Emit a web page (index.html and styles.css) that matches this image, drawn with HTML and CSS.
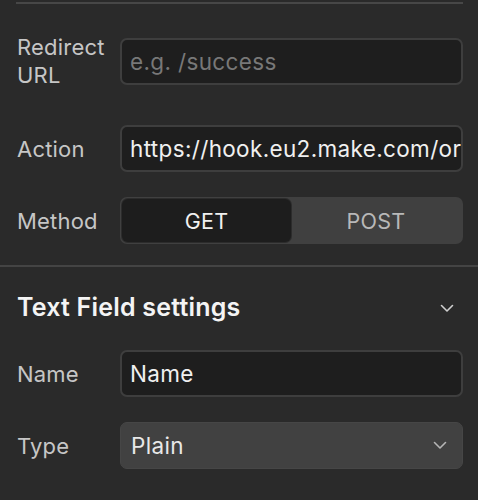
FILE: index.html
```html
<!DOCTYPE html>
<html>
<head>
<meta charset="utf-8">
<link rel="stylesheet" href="styles.css">
</head>
<body>
<div class="panel">
  <div class="top-rule"></div>
  <section class="form-section">
    <div class="row row-tall">
      <label class="label">Redirect<br>URL</label>
      <div class="input placeholder">e.g. /success</div>
    </div>
    <div class="row">
      <label class="label">Action</label>
      <div class="input value">https://hook.eu2.make.com/or</div>
    </div>
    <div class="row">
      <label class="label">Method</label>
      <div class="segmented">
        <div class="seg seg-active">GET</div>
        <div class="seg">POST</div>
      </div>
    </div>
  </section>
  <div class="divider"></div>
  <section class="settings">
    <div class="settings-head">
      <h2 class="title">Text Field settings</h2>
      <svg class="chev" width="14" height="9" viewBox="0 0 14 9"><path d="M1.5 1.5 L7 7 L12.5 1.5" fill="none" stroke="#cfcfcf" stroke-width="1.6" stroke-linecap="round" stroke-linejoin="round"/></svg>
    </div>
    <div class="row">
      <label class="label">Name</label>
      <div class="input value">Name</div>
    </div>
    <div class="row">
      <label class="label">Type</label>
      <div class="select">
        <span>Plain</span>
        <svg width="14" height="9" viewBox="0 0 14 9"><path d="M1.5 1.5 L7 7 L12.5 1.5" fill="none" stroke="#b5b5b5" stroke-width="1.6" stroke-linecap="round" stroke-linejoin="round"/></svg>
      </div>
    </div>
  </section>
</div>
</body>
</html>
```
FILE: styles.css
```css
html, body {
  margin: 0;
  padding: 0;
  background: #2a2a2a;
}
body {
  font-family: Inter, "Noto Sans", sans-serif;
  color: #c9c9c9;
  width: 478px;
  height: 500px;
  overflow: hidden;
}
.top-rule {
  height: 2px;
  margin: 2px 15px 0 16px;
  background: #474747;
}
.form-section {
  padding: 29px 15px 0 17px;
  display: flex;
  flex-direction: column;
  gap: 25px;
}
.row {
  display: grid;
  grid-template-columns: 103px 1fr;
  align-items: center;
}
.row-tall {
  height: 56px;
  margin-bottom: 11px;
}
.label {
  font-size: 22px;
  line-height: 28px;
  letter-spacing: 0.2px;
  color: #c6c6c6;
}
.input {
  height: 47px;
  box-sizing: border-box;
  border: 2px solid #3e3e3e;
  border-radius: 7px;
  background: #1e1e1e;
  padding: 0 8px;
  font-size: 22.5px;
  letter-spacing: 0.35px;
  line-height: 43px;
  white-space: nowrap;
  overflow: hidden;
}
.placeholder { color: #787878; }
.value { color: #f0f0f0; }
.segmented {
  height: 47px;
  box-sizing: border-box;
  border-radius: 7px;
  background: #404040;
  padding: 2px;
  display: flex;
}
.seg {
  flex: 1;
  display: flex;
  align-items: center;
  justify-content: center;
  font-size: 21.5px;
  letter-spacing: 0.3px;
  color: #b8b8b8;
  border-radius: 6px;
}
.seg-active {
  flex: 0 0 169px;
  background: #1d1d1d;
  color: #f0f0f0;
  box-shadow: 0 0 0 1px #2c2c2c;
}
.divider {
  height: 2px;
  margin-top: 21px;
  background: #444444;
}
.settings {
  padding: 0 15px 0 17px;
  display: flex;
  flex-direction: column;
  gap: 25px;
}
.settings-head {
  display: flex;
  align-items: center;
  justify-content: space-between;
  height: 80px;
  margin-bottom: -22px;
  padding-right: 9px;
}
.title {
  margin: 0;
  font-size: 25px;
  font-weight: 600;
  letter-spacing: 0.2px;
  color: #f4f4f4;
}
.chev { margin-top: 2px; }
.select {
  height: 47px;
  box-sizing: border-box;
  border-radius: 7px;
  background: #414141;
  border: 1px solid #464646;
  padding: 0 15px 0 10px;
  display: flex;
  align-items: center;
  justify-content: space-between;
  font-size: 22.5px;
  letter-spacing: 0.35px;
  color: #e8e8e8;
}
```
